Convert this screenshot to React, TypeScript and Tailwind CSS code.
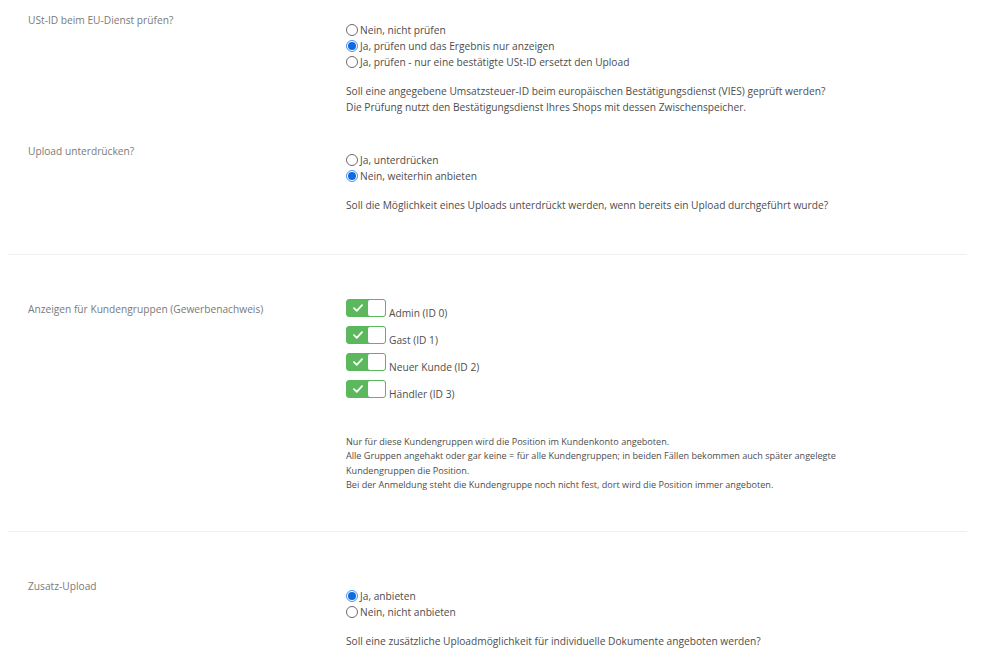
import React from 'react';

const font = { fontFamily: '"Open Sans", "Noto Sans", sans-serif' };

function Radio({ checked, label }: { checked?: boolean; label: string }) {
  return (
    <div className="flex items-center h-4">
      {checked ? (
        <span className="w-3 h-3 rounded-full border border-[#4a90f0] bg-white flex items-center justify-center shrink-0">
          <span className="w-[8px] h-[8px] rounded-full bg-[#0f6ae0]" />
        </span>
      ) : (
        <span className="w-3 h-3 rounded-full border border-[#6b6b6b] bg-white shrink-0" />
      )}
      <span className="ml-[2px]">{label}</span>
    </div>
  );
}

function Toggle({ label }: { label: string }) {
  return (
    <div className="flex items-end h-[18px]">
      <div className="flex w-[40px] h-[18px] rounded-[3px] border border-[#5cb85c] bg-[#5cb85c] shrink-0">
        <div className="w-[21px] flex items-center justify-center">
          <svg width="10" height="8" viewBox="0 0 10 8" fill="none">
            <path d="M1 4.2 L3.8 6.8 L9 1.2" stroke="#fff" strokeWidth="1.8" strokeLinecap="round" strokeLinejoin="round" />
          </svg>
        </div>
        <div className="flex-1 bg-white rounded-[2px]" />
      </div>
      <span className="ml-[3px] leading-[14px] translate-y-[3px]">{label}</span>
    </div>
  );
}

function Row({ label, children }: { label: string; children: React.ReactNode }) {
  return (
    <div className="flex">
      <div className="w-[346px] shrink-0 pl-[28px] text-[#7a7a7a]">{label}</div>
      <div className="flex-1">{children}</div>
    </div>
  );
}

export default function App() {
  return (
    <div className="w-[1000px] h-[665px] bg-white overflow-hidden text-[10.2px] leading-4 text-[#4d4d4d]" style={font}>
      <div className="pt-[12px]">
        <Row label="USt-ID beim EU-Dienst prüfen?">
          <div className="pt-[10px]">
            <Radio label="Nein, nicht prüfen" />
            <Radio checked label="Ja, prüfen und das Ergebnis nur anzeigen" />
            <Radio label="Ja, prüfen - nur eine bestätigte USt-ID ersetzt den Upload" />
            <p className="mt-[13px]">
              Soll eine angegebene Umsatzsteuer-ID beim europäischen Bestätigungsdienst (VIES) geprüft werden?
              <br />
              Die Prüfung nutzt den Bestätigungsdienst Ihres Shops mit dessen Zwischenspeicher.
            </p>
          </div>
        </Row>
        <div className="mt-[28px]">
          <Row label="Upload unterdrücken?">
            <div className="pt-[9px]">
              <Radio label="Ja, unterdrücken" />
              <Radio checked label="Nein, weiterhin anbieten" />
              <p className="mt-[13px]">
                Soll die Möglichkeit eines Uploads unterdrückt werden, wenn bereits ein Upload durchgeführt wurde?
              </p>
            </div>
          </Row>
        </div>
      </div>

      <div className="mt-[41px] ml-[8px] w-[959px] h-px bg-[#f0f0f0]" />

      <div className="pt-[46px]">
        <Row label="Anzeigen für Kundengruppen (Gewerbenachweis)">
          <div className="flex flex-col gap-[9px] -mt-[2px]">
            <Toggle label="Admin (ID 0)" />
            <Toggle label="Gast (ID 1)" />
            <Toggle label="Neuer Kunde (ID 2)" />
            <Toggle label="Händler (ID 3)" />
          </div>
          <p className="mt-[37px] text-[9.1px] leading-[14.4px] w-[520px]">
            Nur für diese Kundengruppen wird die Position im Kundenkonto angeboten.
            <br />
            Alle Gruppen angehakt oder gar keine = für alle Kundengruppen; in beiden Fällen bekommen auch später angelegte
            Kundengruppen die Position.
            <br />
            Bei der Anmeldung steht die Kundengruppe noch nicht fest, dort wird die Position immer angeboten.
          </p>
        </Row>
      </div>

      <div className="mt-[38px] ml-[8px] w-[959px] h-px bg-[#f0f0f0]" />

      <div className="pt-[46px]">
        <Row label="Zusatz-Upload">
          <div className="pt-[10px]">
            <Radio checked label="Ja, anbieten" />
            <Radio label="Nein, nicht anbieten" />
            <p className="mt-[13px]">Soll eine zusätzliche Uploadmöglichkeit für individuelle Dokumente angeboten werden?</p>
          </div>
        </Row>
      </div>
    </div>
  );
}
